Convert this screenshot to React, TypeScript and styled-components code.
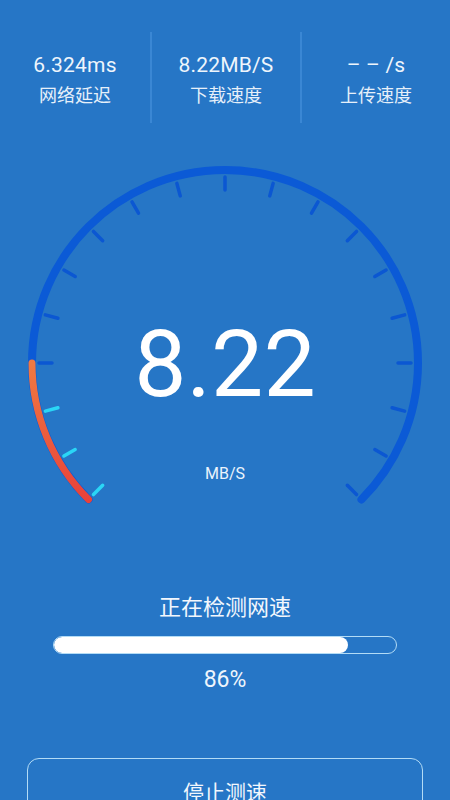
import React from "react";
import styled, { createGlobalStyle } from "styled-components";

const Global = createGlobalStyle`
  html, body { margin: 0; padding: 0; background: #2676c6; }
  body { font-family: Roboto, "Noto Sans CJK SC", sans-serif; overflow: hidden; }
`;

const Page = styled.div`
  width: 450px;
  height: 800px;
  background: #2676c6;
  display: flex;
  flex-direction: column;
  color: #ffffff;
  overflow: hidden;
  & > * { flex-shrink: 0; }
`;

const Stats = styled.div`
  display: grid;
  grid-template-columns: 1fr 1fr 1fr;
  margin-top: 32px;
  height: 91px;
`;

const Stat = styled.div<{ $divider?: boolean }>`
  display: flex;
  flex-direction: column;
  align-items: center;
  justify-content: center;
  gap: 4px;
  border-left: ${(p) => (p.$divider ? "2px solid #3a87d4" : "none")};
  padding-top: 3px;
`;

const StatValue = styled.div`
  font-family: Roboto, sans-serif;
  font-size: 21px;
  line-height: 26px;
  color: #eef5fc;
  letter-spacing: 0.2px;
`;

const StatLabel = styled.div`
  font-family: "Noto Sans CJK SC", sans-serif;
  font-size: 18px;
  line-height: 24px;
  color: #e6f0fa;
`;

const Gauge = styled.div`
  position: relative;
  margin-top: 37px;
  height: 360px;
  width: 450px;
`;

const GaugeSvg = styled.svg`
  display: block;
`;

const Reading = styled.div`
  position: absolute;
  left: 0;
  right: 0;
  top: 148px;
  text-align: center;
  font-family: Roboto, sans-serif;
  font-weight: 400;
  font-size: 93px;
  line-height: 114px;
  color: #ffffff;
`;

const Unit = styled.div`
  position: absolute;
  left: 0;
  right: 0;
  top: 303px;
  text-align: center;
  font-family: Roboto, sans-serif;
  font-size: 16px;
  line-height: 22px;
  color: #eaf3fc;
`;

const Status = styled.div`
  margin-top: 71px;
  display: flex;
  flex-direction: column;
  align-items: center;
`;

const StatusText = styled.div`
  font-family: "Noto Sans CJK SC", sans-serif;
  font-size: 22px;
  line-height: 28px;
  color: #f2f7fd;
`;

const Track = styled.div`
  margin-top: 17px;
  width: 344px;
  height: 18px;
  box-sizing: border-box;
  border: 1.5px solid #b3dcf6;
  border-radius: 9px;
  overflow: hidden;
`;

const Fill = styled.div`
  height: 100%;
  background: #ffffff;
  border-radius: 9px;
`;

const Percent = styled.div`
  margin-top: 13px;
  font-family: Roboto, sans-serif;
  font-size: 23px;
  line-height: 26px;
  color: #eef5fc;
`;

const StopButton = styled.button`
  margin: 65px 27px 0;
  height: 70px;
  box-sizing: border-box;
  border: 1.5px solid #b3dcf6;
  border-radius: 12px;
  background: transparent;
  color: #f2f7fd;
  font-family: "Noto Sans CJK SC", sans-serif;
  font-size: 21px;
  padding: 0 0 4px;
  display: flex;
  align-items: center;
  justify-content: center;
`;

const CX = 225;
const CY = 203;
const R = 193;

function polar(angleFromUp: number, r: number) {
  const a = (angleFromUp * Math.PI) / 180;
  return { x: CX + r * Math.sin(a), y: CY - r * Math.cos(a) };
}

const start = polar(-135, R);
const end = polar(135, R);
const left = polar(-90, R);

const ticks = Array.from({ length: 19 }, (_, i) => -135 + i * 15);

export default function App() {
  const progress = 86;
  return (
    <Page>
      <Global />
      <Stats>
        <Stat>
          <StatValue>6.324ms</StatValue>
          <StatLabel>网络延迟</StatLabel>
        </Stat>
        <Stat $divider>
          <StatValue>8.22MB/S</StatValue>
          <StatLabel>下载速度</StatLabel>
        </Stat>
        <Stat $divider>
          <StatValue>– – /s</StatValue>
          <StatLabel>上传速度</StatLabel>
        </Stat>
      </Stats>
      <Gauge>
        <GaugeSvg width="450" height="360" viewBox="0 0 450 360">
          <defs>
            <linearGradient id="hot" x1="0" y1="1" x2="0" y2="0">
              <stop offset="0" stopColor="#e8423a" />
              <stop offset="1" stopColor="#f07a42" />
            </linearGradient>
          </defs>
          <path
            d={`M ${start.x} ${start.y} A ${R} ${R} 0 1 1 ${end.x} ${end.y}`}
            fill="none"
            stroke="#0b5ad6"
            strokeWidth="8"
            strokeLinecap="round"
          />
          <path
            d={`M ${start.x} ${start.y} A ${R} ${R} 0 0 1 ${left.x} ${left.y}`}
            fill="none"
            stroke="url(#hot)"
            strokeWidth="7"
            strokeLinecap="round"
          />
          {ticks.map((t) => {
            const a = polar(t, 173);
            const b = polar(t, 186);
            const hot = t < -90;
            return (
              <line
                key={t}
                x1={a.x}
                y1={a.y}
                x2={b.x}
                y2={b.y}
                stroke={hot ? "#2ad6f6" : "#0b57d2"}
                strokeWidth="3.5"
                strokeLinecap="round"
              />
            );
          })}
        </GaugeSvg>
        <Reading>8.22</Reading>
        <Unit>MB/S</Unit>
      </Gauge>
      <Status>
        <StatusText>正在检测网速</StatusText>
        <Track>
          <Fill style={{ width: `${progress}%` }} />
        </Track>
        <Percent>{progress}%</Percent>
      </Status>
      <StopButton>停止测速</StopButton>
    </Page>
  );
}
